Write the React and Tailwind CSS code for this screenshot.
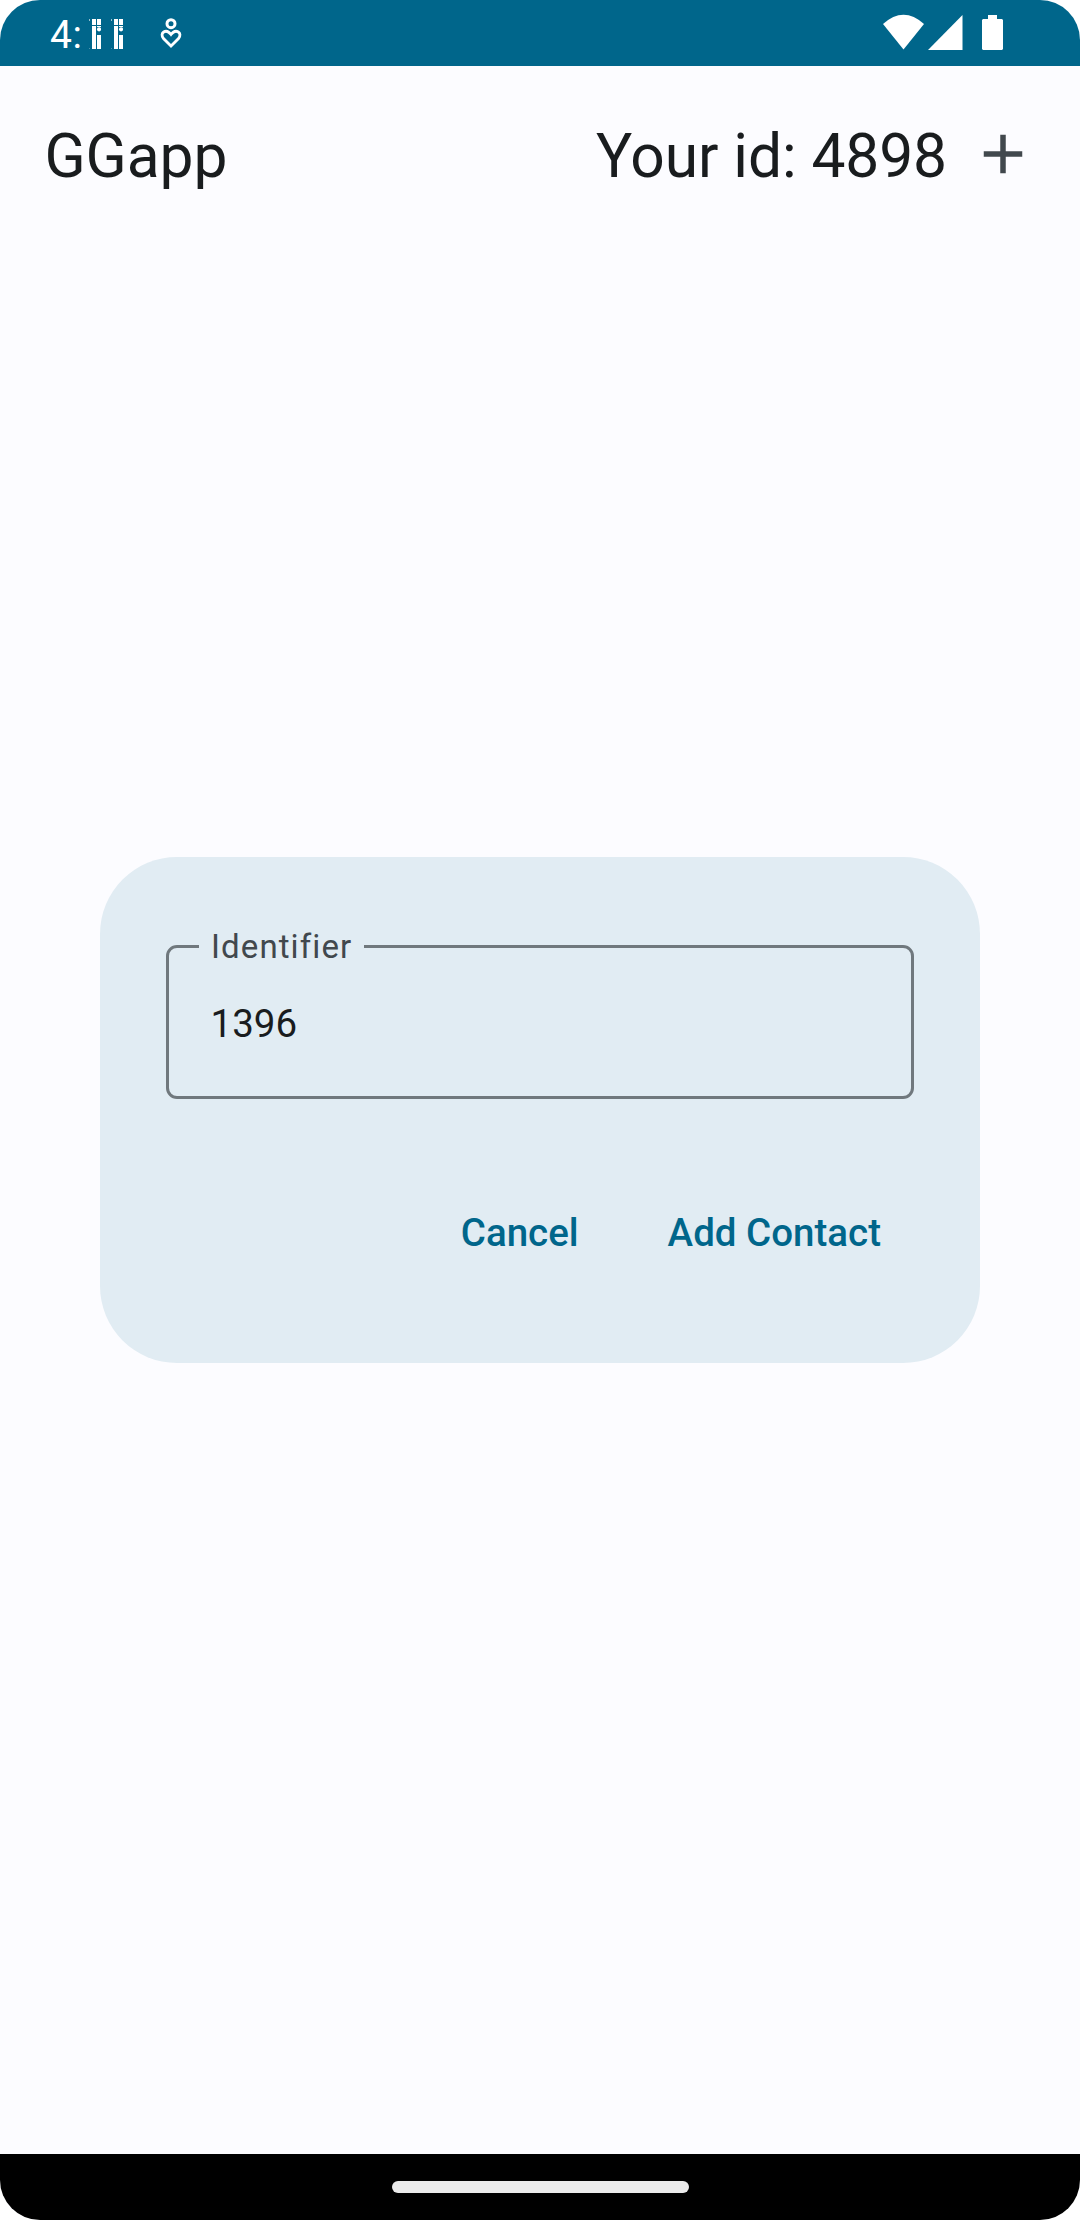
function DigitBars() {
  return (
    <svg width="12" height="31" viewBox="0 0 12 31" fill="#fff">
      <rect x="0" y="0" width="1" height="2" opacity=".6" />
      <rect x="0" y="29" width="1" height="1" opacity=".3" />
      <rect x="3" y="0" width="4" height="6" />
      <rect x="8" y="0" width="4" height="6" />
      <rect x="3" y="7" width="4" height="23" />
      <rect x="8" y="7" width="4" height="1" />
      <circle cx="10" cy="10.300" r="2.100" />
      <rect x="8" y="16" width="4" height="14" />
    </svg>
  );
}

function StatusBar() {
  return (
    <header className="flex h-[66px] shrink-0 items-start bg-[#00668b] pl-[50px] text-white">
      <span className="mt-[12px] text-[39px] leading-[46px] tracking-[0.7px]">4:</span>
      <div className="mt-[19px] ml-[6px] flex gap-[10px]">
        <DigitBars />
        <DigitBars />
      </div>
      <svg className="mt-[17px] ml-[37px]" width="22" height="32" viewBox="0 0 22 32" fill="none" stroke="#fff" strokeWidth="3">
        <circle cx="11" cy="6.700" r="4" />
        <path d="M11 29 3.500 21.500C-1 16 6 11 11 17.500 16 11 23 16 18.500 21.500Z" strokeWidth="2.800" />
      </svg>
      <svg className="mt-[14px] ml-auto" width="41" height="37" viewBox="0 0 41 37" fill="#fff">
        <path d="M0 10Q20.500-8.500 41 10L20.500 35.500Z" />
      </svg>
      <svg className="mt-[15px] ml-[4px]" width="35" height="35" viewBox="0 0 35 35" fill="#fff">
        <path d="M0 35 34.500 0V35Z" />
      </svg>
      <svg className="mt-[15px] mr-[77px] ml-[19px]" width="21" height="35" viewBox="0 0 21 35" fill="#fff">
        <path d="M6 0h9v4h5l1 1v29l-1 1H1l-1-1V5l1-1h5z" />
      </svg>
    </header>
  );
}

function AppBar() {
  return (
    <div className="flex h-[176px] shrink-0 items-center pr-[44px] pl-[44.5px] text-[60.5px] leading-[77px] text-[#191c1e]">
      <h1 className="mt-[4px] tracking-[-0.1px]">GGapp</h1>
      <span className="mt-[4px] ml-auto tracking-[-0.1px]">Your id: 4898</span>
      <button className="ml-[23px]" aria-label="Add">
        <svg width="66" height="66" viewBox="0 0 24 24" fill="#41484d">
          <path d="M19 13h-6v6h-2v-6H5v-2h6V5h2v6h6v2z" />
        </svg>
      </button>
    </div>
  );
}

function IdentifierDialog() {
  return (
    <div className="flex h-[506px] w-[880px] flex-col rounded-[77px] bg-[#e1ecf3] px-[66px]">
      <fieldset className="mt-[66px] h-[176px] rounded-[11px] border-[3px] border-[#70787d] px-[30px]">
        <legend className="px-[12px] text-[33px] leading-[47px] tracking-[1.1px] text-[#41484d]">Identifier</legend>
        <div className="mt-[26px] pl-[11.5px] text-[38.5px] leading-[55px] text-[#191c1e]">1396</div>
      </fieldset>
      <div className="mt-[106px] flex justify-end gap-[89px] pr-[33px] text-[38.5px] leading-[55px] font-medium text-[#00668b]">
        <button>Cancel</button>
        <button>Add Contact</button>
      </div>
    </div>
  );
}

export default function App() {
  return (
    <div className="h-[2220px] w-[1080px] bg-white font-['Roboto',sans-serif]">
      <div className="flex h-full flex-col overflow-hidden rounded-[40px] bg-[#fcfcff]">
        <StatusBar />
        <AppBar />
        <main className="flex flex-1 justify-center pt-[615px]">
          <IdentifierDialog />
        </main>
        <footer className="flex h-[66px] shrink-0 justify-center bg-black pt-[27px]">
          <div className="h-[12px] w-[297px] rounded-full bg-[#ebebeb]" />
        </footer>
      </div>
    </div>
  );
}
